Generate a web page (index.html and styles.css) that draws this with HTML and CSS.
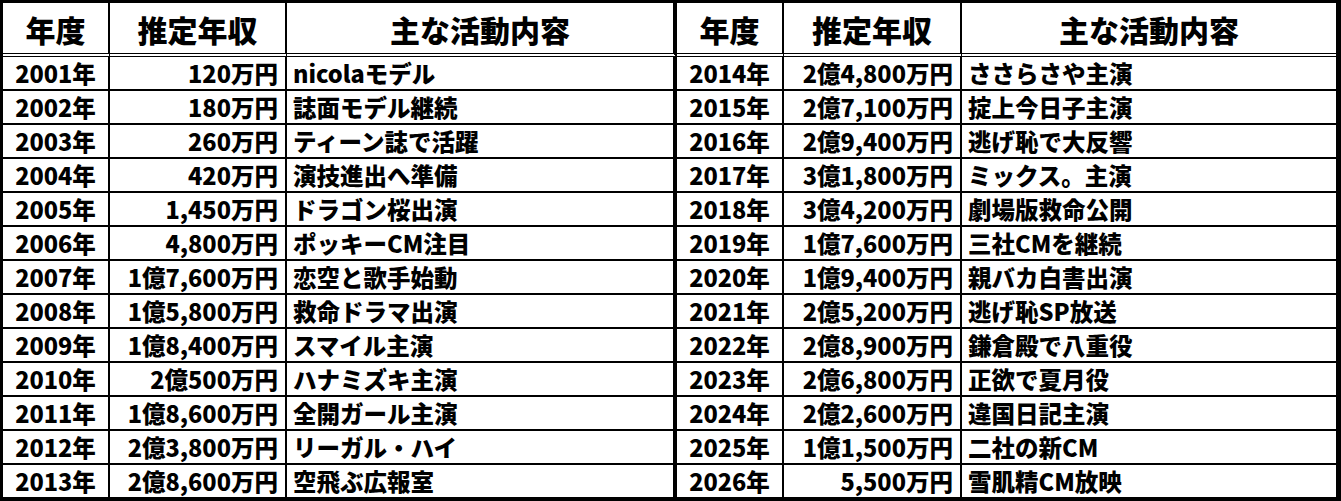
FILE: index.html
```html
<!DOCTYPE html>
<html lang="ja">
<head>
<meta charset="utf-8">
<title>年度別 推定年収</title>
<link rel="stylesheet" href="styles.css">
</head>
<body>
<table class="income">
  <thead>
    <tr>
      <th class="c-year">年度</th>
      <th class="c-pay">推定年収</th>
      <th class="c-act split">主な活動内容</th>
      <th class="c-year2">年度</th>
      <th class="c-pay2">推定年収</th>
      <th class="c-act2 last">主な活動内容</th>
    </tr>
  </thead>
  <tbody>
    <tr><td class="year">2001年</td><td class="pay">120万円</td><td class="act split">nicolaモデル</td><td class="year">2014年</td><td class="pay">2億4,800万円</td><td class="act last">ささらさや主演</td></tr>
    <tr><td class="year">2002年</td><td class="pay">180万円</td><td class="act split">誌面モデル継続</td><td class="year">2015年</td><td class="pay">2億7,100万円</td><td class="act last">掟上今日子主演</td></tr>
    <tr><td class="year">2003年</td><td class="pay">260万円</td><td class="act split">ティーン誌で活躍</td><td class="year">2016年</td><td class="pay">2億9,400万円</td><td class="act last">逃げ恥で大反響</td></tr>
    <tr><td class="year">2004年</td><td class="pay">420万円</td><td class="act split">演技進出へ準備</td><td class="year">2017年</td><td class="pay">3億1,800万円</td><td class="act last">ミックス。主演</td></tr>
    <tr><td class="year">2005年</td><td class="pay">1,450万円</td><td class="act split">ドラゴン桜出演</td><td class="year">2018年</td><td class="pay">3億4,200万円</td><td class="act last">劇場版救命公開</td></tr>
    <tr><td class="year">2006年</td><td class="pay">4,800万円</td><td class="act split">ポッキーCM注目</td><td class="year">2019年</td><td class="pay">1億7,600万円</td><td class="act last">三社CMを継続</td></tr>
    <tr><td class="year">2007年</td><td class="pay">1億7,600万円</td><td class="act split">恋空と歌手始動</td><td class="year">2020年</td><td class="pay">1億9,400万円</td><td class="act last">親バカ白書出演</td></tr>
    <tr><td class="year">2008年</td><td class="pay">1億5,800万円</td><td class="act split">救命ドラマ出演</td><td class="year">2021年</td><td class="pay">2億5,200万円</td><td class="act last">逃げ恥SP放送</td></tr>
    <tr><td class="year">2009年</td><td class="pay">1億8,400万円</td><td class="act split">スマイル主演</td><td class="year">2022年</td><td class="pay">2億8,900万円</td><td class="act last">鎌倉殿で八重役</td></tr>
    <tr><td class="year">2010年</td><td class="pay">2億500万円</td><td class="act split">ハナミズキ主演</td><td class="year">2023年</td><td class="pay">2億6,800万円</td><td class="act last">正欲で夏月役</td></tr>
    <tr><td class="year">2011年</td><td class="pay">1億8,600万円</td><td class="act split">全開ガール主演</td><td class="year">2024年</td><td class="pay">2億2,600万円</td><td class="act last">違国日記主演</td></tr>
    <tr><td class="year">2012年</td><td class="pay">2億3,800万円</td><td class="act split">リーガル・ハイ</td><td class="year">2025年</td><td class="pay">1億1,500万円</td><td class="act last">二社の新CM</td></tr>
    <tr class="final"><td class="year">2013年</td><td class="pay">2億8,600万円</td><td class="act split">空飛ぶ広報室</td><td class="year">2026年</td><td class="pay">5,500万円</td><td class="act last">雪肌精CM放映</td></tr>
  </tbody>
</table>
</body>
</html>
```

FILE: styles.css
```css
html, body {
  margin: 0;
  padding: 0;
  background: #ffffff;
}

body {
  font-family: "Noto Sans CJK JP", "Noto Sans", sans-serif;
  color: #000000;
}

.income {
  border-collapse: separate;
  border-spacing: 0;
  table-layout: fixed;
  width: 1341px;
  box-sizing: border-box;
  border-style: solid;
  border-color: #000000;
  border-width: 3px 5px 4px 3px;
}

.income th,
.income td {
  box-sizing: border-box;
  border-right: 2px solid #000000;
  border-bottom: 2px solid #000000;
  padding: 0;
  font-weight: 900;
  white-space: nowrap;
  overflow: hidden;
}

.income th {
  height: 54px;
  font-size: 30px;
  line-height: 48px;
  text-align: center;
  border-bottom: 4px double #000000;
  padding-top: 2px;
}

.income td {
  height: 34px;
  font-size: 23.5px;
  line-height: 32px;
}

.income tr.final td {
  border-bottom: none;
  height: 32px;
}

.income .split {
  border-right-width: 4px;
}

.income .last {
  border-right: none;
}

.c-year, .c-year2 { width: 107px; }
.c-pay { width: 177px; }
.c-act { width: 390px; }
.c-pay2 { width: 178px; }
.c-act2 { width: 374px; }

.year {
  text-align: center;
}

.pay {
  text-align: right;
  padding-right: 7px !important;
}

.act {
  text-align: left;
  padding-left: 6px !important;
}
```
